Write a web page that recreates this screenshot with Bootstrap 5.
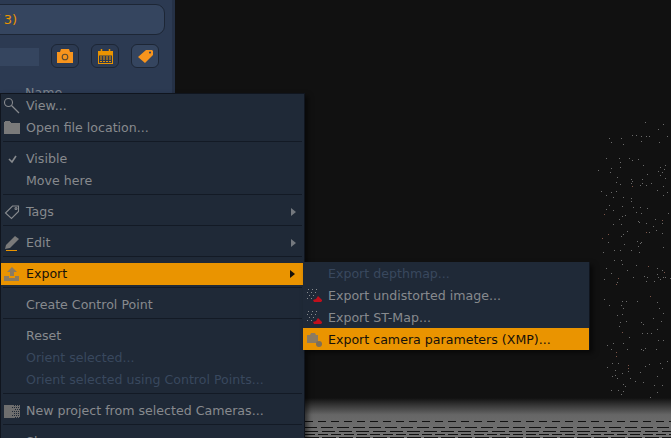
<!DOCTYPE html>
<html lang="en"><head><meta charset="utf-8"><title>Camera context menu</title>
<link rel="stylesheet" href="https://cdn.jsdelivr.net/npm/bootstrap@5.3.0/dist/css/bootstrap.min.css">
<style>
html,body{margin:0;height:100%;background:#111;overflow:hidden}
body,.app-frame{font-family:"DejaVu Sans",sans-serif;font-size:12.6px}
.app-frame{position:relative;width:671px;height:438px;overflow:hidden;background:#111}
.side-panel{width:175px;flex:none;background:#2c3a52;border-right:3px solid #253146;padding-top:4px;padding-right:7px}
.search-field{height:31px;margin-left:-30px;background:#35455f;border:1px solid #1d2635;border-radius:0 9px 9px 0;color:#ea9400;padding-left:16px;line-height:30px;font-size:13px;white-space:nowrap}
.tool-row{margin-top:9px;height:24px;gap:12px}
.filter-box{width:39px;height:18px;background:#35455f}
.tool-btn{width:28px;height:24px;border:1px solid #1d2635;border-radius:6px;background:#2c3a52;padding:0}
.tool-btn.lit{background:#35455f}
.col-head{color:#7d838c;padding-left:25px;margin-top:16px}
.view-port{flex:1;position:relative;background:#111}
.ground{position:absolute;left:0;right:0;bottom:0;height:40px;background:linear-gradient(#111,#666 42%,#737373)}
.app-menu.dropdown-menu{display:block;position:absolute;margin:0;padding:0;background:#1f2937;border:0;border-radius:0;font-size:12.6px;color:#878a8e;box-shadow:3px 3px 5px rgba(0,0,0,.55)}
.main-menu{left:0;top:93px;width:305px;height:360px;border-top:1px solid #10151e!important;border-left:1px solid #10151e!important;border-right:1px solid #10151e!important;padding-top:1px!important}
.sub-menu{left:303px;top:262px;width:287px;height:88px;border-right:1px solid #10151e!important}
.menu-row.dropdown-item{display:flex;align-items:center;height:22px;padding:0 0 0 25px;color:#878a8e;position:relative;line-height:22px}
.sub-menu .menu-row.dropdown-item{padding:1px 0 0 25px;width:286px}
.menu-row.dropdown-item.muted-row{color:#39485e}
.menu-row.dropdown-item.hot-row{background:#ea9400;color:#17110a;width:302px}
.sub-menu .menu-row.dropdown-item.hot-row{width:286px}
.row-glyph{position:absolute;left:1px;top:1px}
.row-arrow{position:absolute;right:8px;top:7px;width:0;height:0;border-left:5px solid #74787e;border-top:4px solid transparent;border-bottom:4px solid transparent}
.hot-row .row-arrow{border-left-color:#17110a}
.menu-line.dropdown-divider{margin:2px 3px 6px 2px;border-top:1px solid #131a25;opacity:1;width:299px}
.cloud{position:absolute;left:0;top:0;width:671px;height:438px}
</style></head><body>
<div class="app-frame d-flex">
 <aside class="side-panel d-flex flex-column">
  <div class="search-field">of 3)</div>
  <div class="tool-row d-flex align-items-start">
   <div class="filter-box mt-1"></div>
   <button class="tool-btn d-flex align-items-center justify-content-center" aria-label="Camera"><svg width="16" height="14" viewBox="0 0 16 14"><path fill="#f7941d" d="M0 3h3l1-3h8l1 3h3v11H0z"/><circle cx="8" cy="8" r="2.800" fill="none" stroke="#5a4a30" stroke-width="1.100"/></svg></button>
   <button class="tool-btn d-flex align-items-center justify-content-center" aria-label="Calendar"><svg width="15" height="15" viewBox="0 0 15 15" fill="none" stroke="#ea9400"><rect x=".5" y="2.500" width="14" height="12"/><path d="M0 3.500h15M0 5.500h15" stroke-width="2"/><path d="M3.500 0v3M11.500 0v3" stroke-width="1.500"/><path d="M2 8h11M2 10h11M2 12.500h11" stroke-dasharray="2 1"/></svg></button>
   <button class="tool-btn lit d-flex align-items-center justify-content-center" aria-label="Tag"><svg width="15" height="14" viewBox="0 0 15 14"><path fill="#f7941d" fill-rule="evenodd" d="M8 1h6l1 1v4l-8 8-7-6zM12 2.500a1 1 0 1 0 .01 0z"/></svg></button>
  </div>
  <div class="col-head">Name</div>
 </aside>
 <main class="view-port"></main>
 <svg class="cloud" viewBox="0 0 671 438" aria-hidden="true">
  <g transform="translate(580 120) scale(.33333)" shape-rendering="crispEdges" fill="none" stroke-width="3">
  <path stroke="#6c6c6c" d="M196 8h3M250 13h3M235 28h3M88 55h3M124 55h3M94 67h3M130 73h3M157 46h3M169 46h3M184 49h3M199 49h3M208 49h3M262 49h3M184 64h3M238 67h3M79 115h3M118 115h3M148 115h3M157 121h3M175 118h3M121 127h3M190 136h3M121 142h3M94 145h3M55 151h3M91 157h3M241 142h3M256 136h3M253 148h3M235 154h3M247 157h3M202 163h3M241 166h3M112 172h3M256 175h3M154 178h3M187 178h3M109 187h3M121 193h3M157 184h3M154 190h3M187 190h3M181 196h3M199 196h3M214 190h3M250 199h3M232 211h3M64 214h3M94 217h3M109 214h3M262 217h3M79 226h3M250 226h3M100 232h3M130 232h3M154 235h3M154 244h3M79 268h3M88 256h3M100 271h3M127 259h3M160 262h3M181 262h3M202 265h3M169 277h3M184 280h3M265 280h3M136 286h3M127 289h3M118 298h3M100 313h3M124 313h3M226 298h3M247 310h3M175 304h3M178 307h3M199 310h3M220 319h3M229 331h3M142 334h3M130 343h3M124 349h3M208 337h3M247 340h3M85 367h3M172 364h3M184 367h3M181 370h3M133 373h3M175 379h3M250 382h3M70 397h3M103 391h3M121 391h3M154 391h3M178 397h3M103 421h3M124 421h3M127 433h3M169 436h3M79 445h3M142 451h3M232 445h3M247 451h3M94 460h3M232 463h3M193 469h3M202 472h3M160 472h3M235 472h3M250 472h3M256 472h3M271 475h3M223 484h3M199 484h3M241 478h3M73 478h3M112 487h3M73 538h3M127 544h3M139 544h3M172 544h3M232 547h3M88 556h3M124 556h3M238 565h3M130 565h3M250 580h3M112 586h3M127 583h3M220 595h3M139 604h3M121 607h3M184 607h3M190 613h3M118 619h3M232 628h3M244 604h3M187 640h3M202 640h3M214 640h3M148 652h3M235 661h3M250 661h3M130 670h3M100 670h3M82 676h3M94 688h3M142 688h3M184 688h3M190 691h3M196 685h3M229 688h3M97 730h3M115 730h3M262 724h3M241 730h3M208 733h3M196 739h3M82 742h3M106 751h3M145 754h3M247 745h3M127 760h3M181 757h3M97 769h3M106 766h3M112 775h3M151 775h3M232 769h3M166 784h3M190 787h3M130 793h3M136 799h3M223 796h3M247 796h3M94 811h3M115 811h3M130 814h3M124 823h3M232 817h3M211 832h3M268 835h3M127 841h3M154 847h3M202 847h3M121 862h3"/>
  <path stroke="#7e5548" d="M157 199h3M247 301h3M199 337h3M67 355h3M85 343h3M73 283h3M205 439h3M115 475h3M109 493h3M211 529h3M127 637h3M109 697h3M109 709h3M145 736h3M145 745h3M253 457h3"/>
  </g>
 </svg>
 <div class="ground" aria-hidden="true"></div>
 <svg class="cloud" viewBox="0 0 671 438" aria-hidden="true" fill="none" stroke="#111" shape-rendering="crispEdges">
  <path d="M305 421.500h366" stroke-dasharray="8 5"/><path d="M305 427.500h366" stroke-dasharray="12 4"/><path d="M305 431.500h366" stroke-dasharray="13 4"/><path d="M305 434.500h366" stroke-dasharray="10 3"/><path d="M305 437.500h366" stroke-dasharray="14 3"/>
 </svg>

 <div class="app-menu main-menu dropdown-menu">
  <a class="menu-row dropdown-item"><svg class="row-glyph" width="20" height="20" viewBox="0 0 20 20" fill="none" stroke="#878a8e"><circle cx="6.500" cy="6.500" r="4" stroke-width="1.100"/><path d="M9.500 9.500l7.500 7.500" stroke-width="1.200"/></svg>View...</a>
  <a class="menu-row dropdown-item"><svg class="row-glyph" width="20" height="20" viewBox="0 0 20 20"><path fill="#7a7a7a" d="M2 4h1V3h5v1h1v1h9v11H2z"/></svg>Open file location...</a>
  <hr class="menu-line dropdown-divider">
  <a class="menu-row dropdown-item"><svg class="row-glyph" width="20" height="20" viewBox="0 0 20 20" fill="none" stroke="#878a8e" stroke-width="1.600"><path d="M7 10l3 3 4-6"/></svg>Visible</a>
  <a class="menu-row dropdown-item">Move here</a>
  <hr class="menu-line dropdown-divider">
  <a class="menu-row dropdown-item"><svg class="row-glyph" width="20" height="20" viewBox="0 0 20 20" fill="none" stroke="#878a8e" stroke-width="1.100"><path d="M3.500 11l7-7h6v5.500l-7 7z"/><circle cx="14" cy="6.500" r="1"/></svg>Tags<span class="row-arrow"></span></a>
  <hr class="menu-line dropdown-divider">
  <a class="menu-row dropdown-item"><svg class="row-glyph" width="20" height="20" viewBox="0 0 20 20"><path fill="#7a7a7a" d="M4 12l9-9 4 3-9 9-5 1z"/><path stroke="#ea9400" d="M4 17.500h11"/></svg>Edit<span class="row-arrow"></span></a>
  <hr class="menu-line dropdown-divider">
  <a class="menu-row dropdown-item hot-row"><svg class="row-glyph" width="20" height="20" viewBox="0 0 20 20"><path fill="#8b7b62" d="M10 3l5 5h-3v4H8V8H5zM2 12h5v2h6v-2h4v5H2z"/></svg>Export<span class="row-arrow"></span></a>
  <hr class="menu-line dropdown-divider">
  <a class="menu-row dropdown-item">Create Control Point</a>
  <hr class="menu-line dropdown-divider">
  <a class="menu-row dropdown-item">Reset</a>
  <a class="menu-row dropdown-item muted-row">Orient selected...</a>
  <a class="menu-row dropdown-item muted-row">Orient selected using Control Points...</a>
  <hr class="menu-line dropdown-divider">
  <a class="menu-row dropdown-item"><svg class="row-glyph" width="20" height="20" viewBox="0 0 20 20"><rect x="2" y="4" width="16" height="13" fill="#6e6e6e"/><path stroke="#1f2937" stroke-dasharray="1 1" d="M12 4.500h6M10 6.500h8M13 8.500h5M10 10.500h8M12 12.500h6M10 14.500h8M13 16.500h5"/></svg>New project from selected Cameras...</a>
  <hr class="menu-line dropdown-divider">
  <a class="menu-row dropdown-item">Show<span class="row-arrow"></span></a>
 </div>

 <div class="app-menu sub-menu dropdown-menu">
  <a class="menu-row dropdown-item muted-row">Export depthmap...</a>
  <a class="menu-row dropdown-item"><svg class="row-glyph" width="20" height="20" viewBox="0 0 20 20"><path stroke="#878a8e" stroke-dasharray="1 3" d="M4 4.500h11M3 7.500h9M5 10.500h5M3 13.500h5"/><path fill="#c0101c" d="M9 15l3-1 2-3 2 2 2 2v1l-1 1h-7z"/></svg>Export undistorted image...</a>
  <a class="menu-row dropdown-item"><svg class="row-glyph" width="20" height="20" viewBox="0 0 20 20"><path stroke="#878a8e" stroke-dasharray="1 3" d="M4 4.500h11M3 7.500h9M5 10.500h5M3 13.500h5"/><path fill="#c0101c" d="M9 15l3-1 2-3 2 2 2 2v1l-1 1h-7z"/></svg>Export ST-Map...</a>
  <a class="menu-row dropdown-item hot-row"><svg class="row-glyph" width="20" height="20" viewBox="0 0 20 20"><path fill="#8b7b62" d="M3 6h3l1-2h4l1 2h2v8H3z"/><circle cx="15" cy="15" r="3" fill="#7d6f58"/></svg>Export camera parameters (XMP)...</a>
 </div>
</div>
<script src="https://cdn.jsdelivr.net/npm/bootstrap@5.3.0/dist/js/bootstrap.bundle.min.js"></script>
</body></html>
